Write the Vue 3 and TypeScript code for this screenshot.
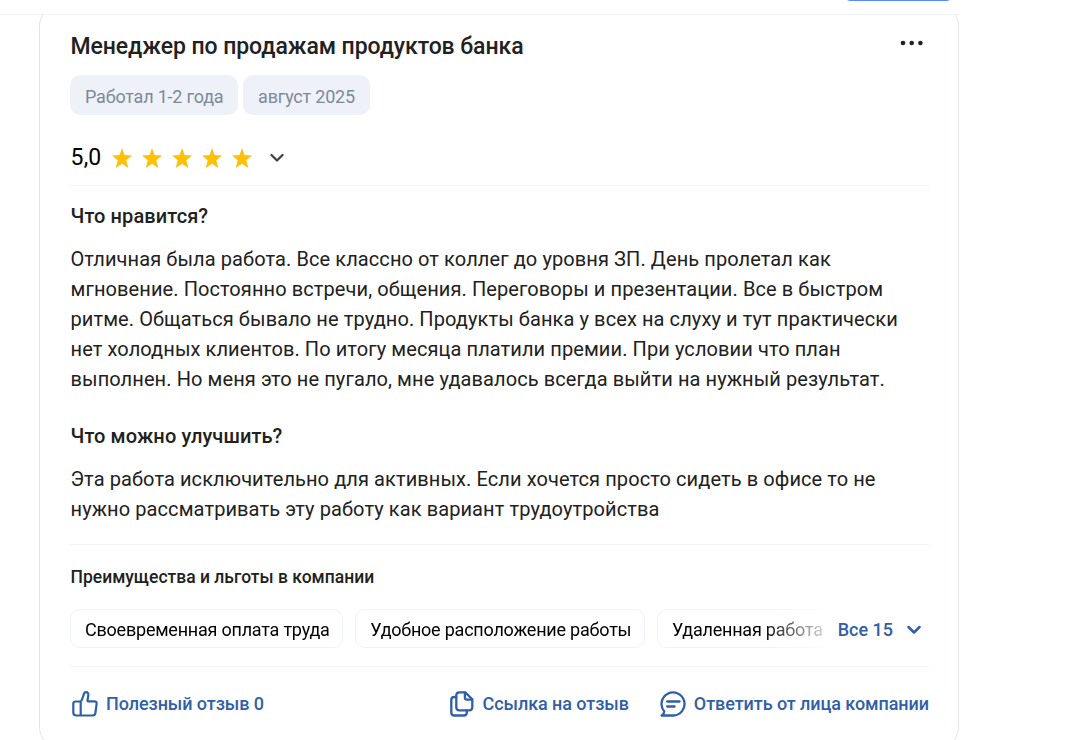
<template>
    <div class="page">
        <header class="topbar">
            <button class="topbar-button" aria-label="Меню"></button>
        </header>

        <article class="review">
            <div class="review-head">
                <h2 class="review-title">Менеджер по продажам продуктов банка</h2>
                <button class="btn-more" aria-label="Ещё">
                    <svg width="24" height="6" viewBox="0 0 24 6" fill="currentColor">
                        <circle cx="3" cy="3" r="2.3" />
                        <circle cx="11.7" cy="3" r="2.3" />
                        <circle cx="20.4" cy="3" r="2.3" />
                    </svg>
                </button>
            </div>

            <div class="tags">
                <span v-for="tag in tags" :key="tag" class="tag">{{ tag }}</span>
            </div>

            <div class="rating">
                <span class="rating-value">5,0</span>
                <span class="stars">
                    <svg v-for="n in 5" :key="n" width="20" height="20" viewBox="0 0 20 20" fill="#ffc107">
                        <path d="M10 0 12.5 6.9 20 7.4 14.3 12.2 16.3 20 10 15.8 3.7 20 5.7 12.2 0 7.4 7.5 6.9Z" />
                    </svg>
                </span>
                <svg class="rating-arrow" width="14" height="9" viewBox="0 0 14 9" fill="none" stroke="currentColor" stroke-width="2.3" stroke-linecap="round" stroke-linejoin="round">
                    <path d="M1.5 2 7 7.5l5.5-5.5" />
                </svg>
            </div>

            <section v-for="block in blocks" :key="block.title" class="block">
                <h3 class="block-title">{{ block.title }}</h3>
                <p class="block-text">
                    <span v-for="line in block.lines" :key="line" class="line">{{ line }}</span>
                </p>
            </section>

            <section class="benefits">
                <h4 class="benefits-title">Преимущества и льготы в компании</h4>
                <div class="benefits-row">
                    <div class="benefits-list">
                        <span v-for="benefit in benefits" :key="benefit" class="benefit">{{ benefit }}</span>
                    </div>
                    <button class="btn-all">
                        Все 15
                        <svg width="14" height="9" viewBox="0 0 14 9" fill="none" stroke="currentColor" stroke-width="2.5" stroke-linecap="round" stroke-linejoin="round">
                            <path d="M1.5 2 7 7.5l5.5-5.5" />
                        </svg>
                    </button>
                </div>
            </section>

            <footer class="actions">
                <button class="action action-like" @click="likes++">
                    <svg width="26" height="26" viewBox="0 0 26 26" fill="none" stroke="currentColor" stroke-width="2.2" stroke-linecap="round" stroke-linejoin="round">
                        <path d="M8.7 10.5H3.5Q1.3 10.5 1.3 12.7V21.5Q1.3 24.5 4.3 24.5H20.3Q23 24.5 23.4 22L24.6 13Q25 10.3 22.4 10.3H16.1Q15.4 10.3 15.5 9.5L16.3 4.3Q16.6 1.2 14 1.2Q12.5 1.2 12 2.7L10.6 7Q9.8 9.5 8.7 10.5V24.3" />
                    </svg>
                    <span class="action-text">Полезный отзыв {{ likes }}</span>
                </button>
                <button class="action action-link">
                    <svg width="26" height="26" viewBox="0 0 26 26" fill="none" stroke="currentColor" stroke-width="2.3" stroke-linecap="round" stroke-linejoin="round">
                        <path d="M16.2 1.3H10.3Q7.3 1.3 7.3 4.3V16.3Q7.3 19.3 10.3 19.3H20.3Q23.3 19.3 23.3 16.3V8.4Z" />
                        <path d="M15.9 1.6V6.6Q15.9 8.7 18 8.7H23" />
                        <path d="M7.2 6H5.3Q2.3 6 2.3 9V21.5Q2.3 24.5 5.3 24.5H14.8Q17.8 24.5 17.8 21.5V19.5" />
                    </svg>
                    <span class="action-text">Ссылка на отзыв</span>
                </button>
                <button class="action action-reply">
                    <svg width="26" height="26" viewBox="0 0 26 26" fill="none" stroke="currentColor" stroke-width="2.3" stroke-linecap="round" stroke-linejoin="round">
                        <path d="M1.7 24.5H13A11.5 11.5 0 1 0 4.3 20.5Q4.2 22.8 1.7 24.5Z" />
                        <path d="M7.2 10.5H19.6M7.2 15.5H14.6" />
                    </svg>
                    <span class="action-text">Ответить от лица компании</span>
                </button>
            </footer>
        </article>
    </div>
</template>

<script setup lang="ts">
import { ref } from 'vue';

interface Block {
    title: string;
    lines: string[];
}

const likes = ref(0);

const tags = ['Работал 1-2 года', 'август 2025'];

const blocks: Block[] = [
    {
        title: 'Что нравится?',
        lines: [
            'Отличная была работа. Все классно от коллег до уровня ЗП. День пролетал как',
            'мгновение. Постоянно встречи, общения. Переговоры и презентации. Все в быстром',
            'ритме. Общаться бывало не трудно. Продукты банка у всех на слуху и тут практически',
            'нет холодных клиентов. По итогу месяца платили премии. При условии что план',
            'выполнен. Но меня это не пугало, мне удавалось всегда выйти на нужный результат.',
        ],
    },
    {
        title: 'Что можно улучшить?',
        lines: [
            'Эта работа исключительно для активных. Если хочется просто сидеть в офисе то не',
            'нужно рассматривать эту работу как вариант трудоутройства',
        ],
    },
];

const benefits = ['Своевременная оплата труда', 'Удобное расположение работы', 'Удаленная работа'];
</script>

<style>
body {
    margin: 0;
    background: #fff;
}
</style>

<style scoped>
.page {
    height: 740px;
    overflow: hidden;
    font-family: Roboto, "Liberation Sans", sans-serif;
    color: #212121;
}

button {
    padding: 0;
    border: none;
    background: none;
    font: inherit;
    color: inherit;
    cursor: pointer;
}

.topbar {
    position: relative;
    z-index: 1;
    box-sizing: border-box;
    display: flex;
    justify-content: flex-end;
    align-items: flex-start;
    width: 960px;
    height: 15px;
    padding-right: 6px;
    background: #fff;
    border-bottom: 1px solid #edf0f7;
}

.topbar-button {
    width: 111px;
    height: 40px;
    margin-top: -39px;
    border-radius: 8px;
    background: #538bff;
}

.review {
    box-sizing: border-box;
    width: 920px;
    height: 745px;
    margin: -11px 0 0 39px;
    padding: 25px 29px 0 30px;
    border: 1px solid #dfe4ee;
    border-radius: 22px;
}

.review-head {
    display: flex;
    justify-content: space-between;
    align-items: flex-start;
    height: 45px;
}

.review-title {
    margin: 0;
    font-size: 23px;
    font-weight: 500;
    line-height: 34px;
    letter-spacing: -0.07px;
    text-indent: 0.5px;
}

.btn-more {
    display: flex;
    margin: 10px 5px 0 0;
}

.tags {
    display: flex;
    gap: 5px;
}

.tag {
    height: 40px;
    padding: 0 14.7px 0 15px;
    border-radius: 10px;
    background: #eef1f8;
    color: #7d8a99;
    font-size: 18px;
    line-height: 44px;
    letter-spacing: -0.2px;
}

.rating {
    display: flex;
    align-items: center;
    height: 71px;
    box-sizing: border-box;
    padding-top: 15px;
    border-bottom: 1px solid #f4f5fa;
}

.rating-value {
    width: 31px;
    color: #000;
    font-size: 23px;
    letter-spacing: 0.2px;
    text-indent: 0.5px;
}

.stars {
    display: flex;
    gap: 10px;
    margin-left: 11px;
}

.rating-arrow {
    margin-left: 18px;
    color: #424242;
}

.block {
    padding-top: 15px;
}

.block + .block {
    padding-top: 27px;
}

.block-title {
    margin: 0 0 13px;
    font-size: 20px;
    font-weight: 500;
    line-height: 30px;
    letter-spacing: 0.1px;
    text-indent: 0.5px;
}

.block-text {
    margin: 0;
    font-size: 20px;
    line-height: 30px;
    letter-spacing: 0.092px;
    text-indent: 0.5px;
}

.line {
    display: block;
    white-space: nowrap;
}

.benefits {
    margin-top: 20px;
    border-top: 1px solid #f4f5fa;
    border-bottom: 1px solid #f4f5fa;
}

.benefits-title {
    margin: 19px 0;
    font-size: 17.5px;
    font-weight: 500;
    line-height: 26px;
    text-indent: 0.5px;
}

.benefits-row {
    display: flex;
    align-items: center;
    justify-content: space-between;
    padding-bottom: 18px;
}

.benefits-list {
    display: flex;
    gap: 12px;
    width: 753px;
    overflow: hidden;
    mask-image: linear-gradient(to right, #000 692px, transparent 767px);
}

.benefit {
    flex: none;
    box-sizing: border-box;
    height: 39px;
    padding: 0 12.6px 0 14px;
    border: 1px solid #f0f2fa;
    border-radius: 10px;
    color: #000;
    font-size: 18px;
    line-height: 40px;
    letter-spacing: -0.22px;
    white-space: nowrap;
}

/* the last one runs under the fade */
.benefit:last-child {
    width: 200px;
}

.btn-all {
    display: flex;
    align-items: center;
    gap: 14px;
    padding: 2px 8px 0 0;
    color: #315fa7;
    font-size: 18px;
    font-weight: 500;
}

.actions {
    display: flex;
    align-items: center;
    height: 74px;
}

.action {
    display: flex;
    align-items: center;
    gap: 8px;
    color: #315fa7;
    font-size: 18px;
    font-weight: 500;
    letter-spacing: -0.07px;
    white-space: nowrap;
}

.action-text {
    padding-bottom: 2px;
}

.action-like {
    margin-left: 2px;
}

.action-link {
    margin-left: auto;
}

.action-reply {
    margin-left: 31px;
}
</style>
